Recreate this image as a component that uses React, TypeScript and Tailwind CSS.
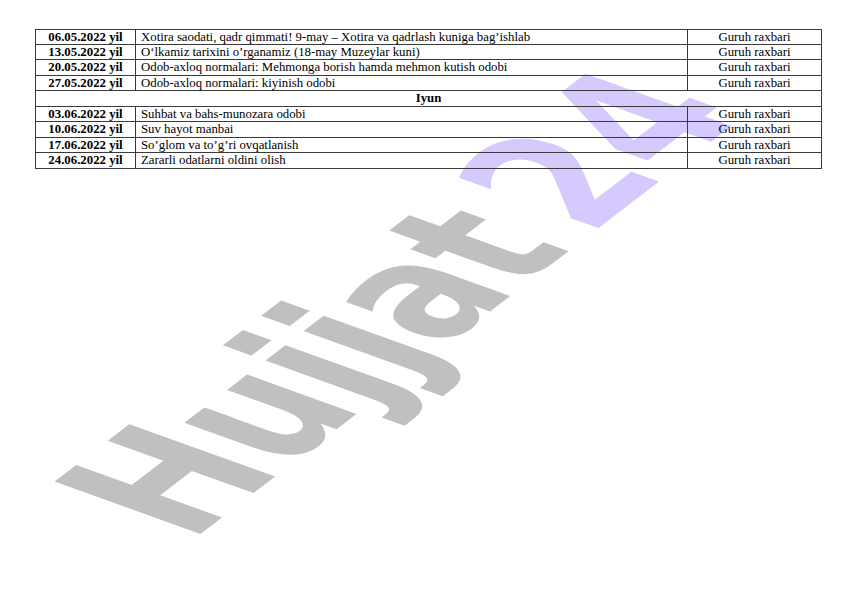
import React from "react";

type Row = { date: string; text: string; who: string };

const may: Row[] = [
  { date: "06.05.2022 yil", text: "Xotira saodati, qadr qimmati! 9-may – Xotira va qadrlash kuniga bag’ishlab", who: "Guruh raxbari" },
  { date: "13.05.2022 yil", text: "O‘lkamiz tarixini o’rganamiz (18-may Muzeylar kuni)", who: "Guruh raxbari" },
  { date: "20.05.2022 yil", text: "Odob-axloq normalari: Mehmonga borish hamda mehmon kutish odobi", who: "Guruh raxbari" },
  { date: "27.05.2022 yil", text: "Odob-axloq normalari: kiyinish odobi", who: "Guruh raxbari" },
];

const june: Row[] = [
  { date: "03.06.2022 yil", text: "Suhbat va bahs-munozara odobi", who: "Guruh raxbari" },
  { date: "10.06.2022 yil", text: "Suv hayot manbai", who: "Guruh raxbari" },
  { date: "17.06.2022 yil", text: "So’glom va to’g’ri ovqatlanish", who: "Guruh raxbari" },
  { date: "24.06.2022 yil", text: "Zararli odatlarni oldini olish", who: "Guruh raxbari" },
];

function DataRow({ r, h, last }: { r: Row; h: string; last?: boolean }) {
  return (
    <div className={`flex ${h} ${last ? "" : "border-b border-[#3a3a3a]"} leading-none`}>
      <div className="w-[100px] shrink-0 flex items-center justify-center font-bold border-r border-[#3a3a3a]">
        {r.date}
      </div>
      <div className="flex-1 flex items-center pl-[5px] border-r border-[#3a3a3a]">{r.text}</div>
      <div className="w-[133px] shrink-0 flex items-center justify-center">{r.who}</div>
    </div>
  );
}

export default function App() {
  return (
    <div className="relative w-[842px] h-[596px] bg-white overflow-hidden">
      <div
        className="absolute left-0 top-0 origin-top-left [transform:matrix(0.793,-0.609,1.389,0.499,20.5,481)] whitespace-nowrap leading-none font-bold text-[144px]"
        style={{ fontFamily: '"DejaVu Sans", sans-serif' }}
      >
        <span className="text-[#c0c0c0] tracking-[-1px]">Hujjat</span>
        <span className="inline-block ml-[22px] text-[#d6c9fd]">24</span>
      </div>

      <div
        className="relative ml-[35px] mt-[29px] w-[787px] border border-[#3a3a3a] text-[12.8px] text-black"
        style={{ fontFamily: '"Liberation Serif", "Times New Roman", serif' }}
      >
        <DataRow r={may[0]} h="h-[15px]" />
        <DataRow r={may[1]} h="h-[15px]" />
        <DataRow r={may[2]} h="h-[16px]" />
        <DataRow r={may[3]} h="h-[15px]" />
        <div className="flex h-[16px] items-center justify-center border-b border-[#3a3a3a] font-bold leading-none">
          Iyun
        </div>
        <DataRow r={june[0]} h="h-[15px]" />
        <DataRow r={june[1]} h="h-[16px]" />
        <DataRow r={june[2]} h="h-[15px]" />
        <DataRow r={june[3]} h="h-[15px]" last />
      </div>
    </div>
  );
}
